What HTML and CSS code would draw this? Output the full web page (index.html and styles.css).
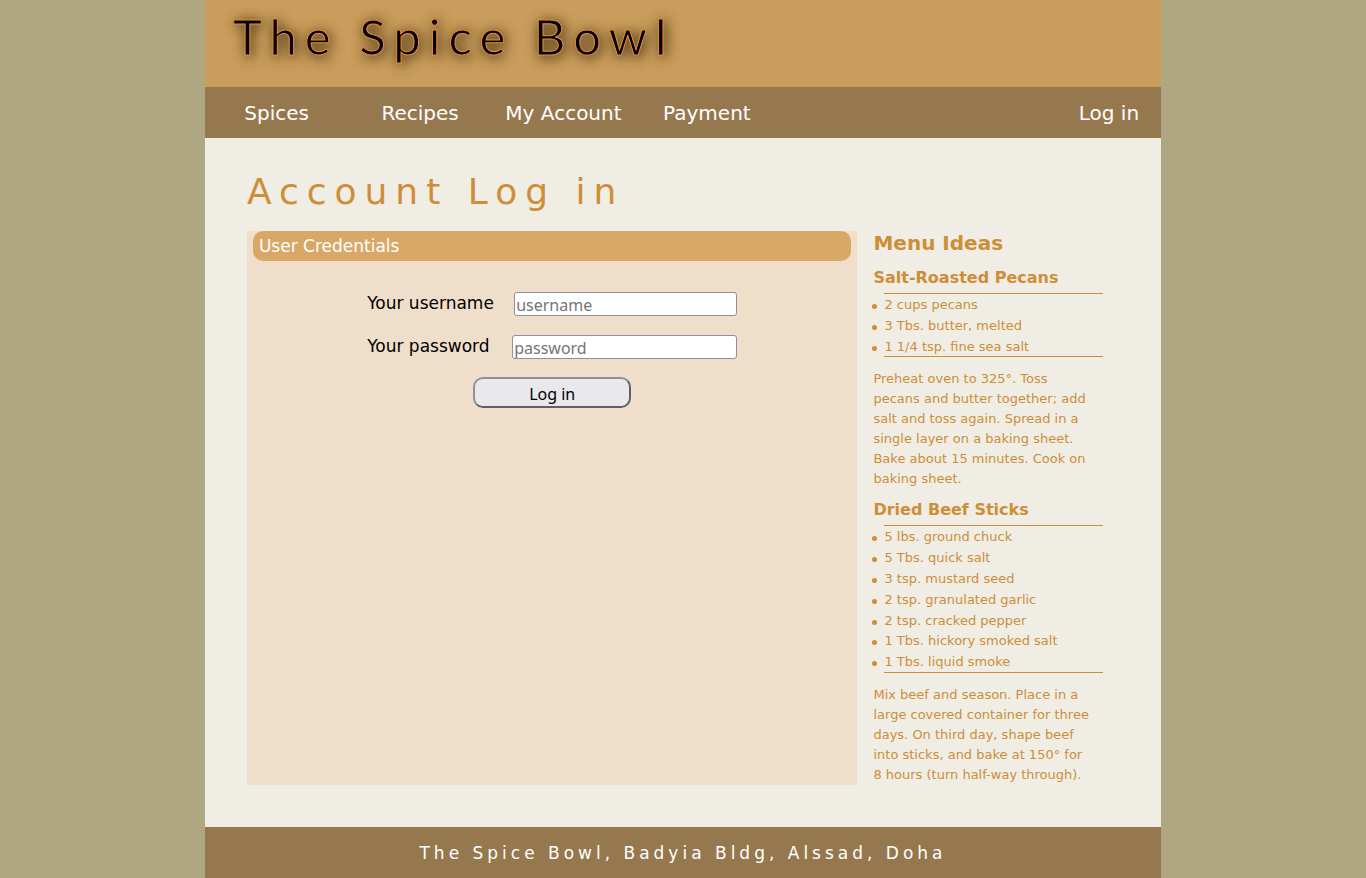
FILE: index.html
```html
<!DOCTYPE html>
<html lang="en">
<head>
<meta charset="utf-8">
<title>The Spice Bowl - Account Log in</title>
<link rel="stylesheet" href="styles.css">
</head>
<body>
<div class="page">
  <header class="banner"><div class="logo">The Spice Bowl</div></header>
  <nav class="nav">
    <a class="nav-link" href="#spices">Spices</a>
    <a class="nav-link" href="#recipes">Recipes</a>
    <a class="nav-link" href="#account">My Account</a>
    <a class="nav-link" href="#payment">Payment</a>
    <a class="nav-login" href="#login">Log in</a>
  </nav>
  <main class="main">
    <h1 class="title">Account Log in</h1>
    <div class="columns">
      <section class="panel">
        <h2 class="panel-title">User Credentials</h2>
        <form class="form">
          <div class="field">
            <label for="username">Your username</label>
            <input class="input" id="username" type="text" placeholder="username">
          </div>
          <div class="field">
            <label for="password">Your password</label>
            <input class="input input-wide" id="password" type="password" placeholder="password">
          </div>
          <button class="submit" type="submit">Log in</button>
        </form>
      </section>
      <aside class="ideas">
        <h2 class="ideas-title">Menu Ideas</h2>
        <h3 class="recipe">Salt-Roasted Pecans</h3>
        <ul class="ingredients">
          <li>2 cups pecans</li>
          <li>3 Tbs. butter, melted</li>
          <li>1 1/4 tsp. fine sea salt</li>
        </ul>
        <p class="method">Preheat oven to 325°. Toss pecans and butter together; add salt and toss again. Spread in a single layer on a baking sheet. Bake about 15 minutes. Cook on baking sheet.</p>
        <h3 class="recipe">Dried Beef Sticks</h3>
        <ul class="ingredients">
          <li>5 lbs. ground chuck</li>
          <li>5 Tbs. quick salt</li>
          <li>3 tsp. mustard seed</li>
          <li>2 tsp. granulated garlic</li>
          <li>2 tsp. cracked pepper</li>
          <li>1 Tbs. hickory smoked salt</li>
          <li>1 Tbs. liquid smoke</li>
        </ul>
        <p class="method">Mix beef and season. Place in a large covered container for three days. On third day, shape beef into sticks, and bake at 150° for 8 hours (turn half-way through).</p>
      </aside>
    </div>
  </main>
  <footer class="footer">The Spice Bowl, Badyia Bldg, Alssad, Doha</footer>
</div>
</body>
</html>
```

FILE: styles.css
```css
* { box-sizing: border-box; }

body {
  margin: 0;
  background: #afa782;
  font-family: Verdana, "DejaVu Sans", sans-serif;
  font-size: 16px;
  color: #000;
}

.page {
  width: 70%;
  min-height: 100vh;
  margin: 0 auto;
  display: flex;
  flex-direction: column;
  background: #f0ede5;
}

.banner {
  padding: 6px 28px 21px;
  background: #ca9d5c;
}

.logo {
  font-family: Lato, sans-serif;
  font-size: 49px;
  line-height: 60px;
  letter-spacing: 8px;
  white-space: nowrap;
  color: #000;
  -webkit-text-stroke: 1px #e8893c;
  text-shadow: 2px 2px 12px #5a4218, 2px 2px 14px #5a4218;
}

.nav {
  display: flex;
  align-items: center;
  padding-top: 2px;
  background: #96784e;
  font-size: 20px;
  line-height: 49px;
}

.nav a {
  color: #fff;
  text-decoration: none;
  white-space: nowrap;
}

.nav-link {
  width: 15%;
  text-align: center;
}

.nav-login {
  margin-left: auto;
  padding-right: 22px;
}

.main {
  flex: 1;
  display: flex;
  flex-direction: column;
  padding: 30px 42px 42px;
}

.title {
  margin: 0 0 15px;
  font-size: 36px;
  font-weight: 400;
  line-height: 48px;
  letter-spacing: 8px;
  color: #ce8e38;
}

.columns {
  flex: 1;
  display: flex;
}

.panel {
  width: 70%;
  padding: 0 6px;
  background: #efdec9;
}

.panel-title {
  margin: 0;
  padding: 0 6px;
  border-radius: 10px;
  background: #d9a867;
  color: #fff;
  font-size: 17px;
  font-weight: 400;
  line-height: 30px;
}

.form {
  width: 370px;
  max-width: 100%;
  margin: 31px auto 0;
  display: flex;
  flex-direction: column;
}

.field {
  display: flex;
  justify-content: space-between;
  margin-bottom: 19px;
  font-size: 17px;
  line-height: 22px;
}

.input,
.submit {
  font-family: Tahoma, "Noto Sans", sans-serif;
  font-size: 16px;
}

.input {
  width: 223px;
  height: 24px;
  padding: 2px 1px 0;
  border: 1px solid #8f8f9d;
  border-radius: 3px;
  background: #fff;
}

.input-wide { width: 225px; }

.input::placeholder { color: #757575; }

.submit {
  align-self: center;
  width: 158px;
  height: 31px;
  margin-top: -1px;
  padding: 2px 0 0;
  border: 2px solid;
  border-color: #8f8f9d #5f5f69 #5f5f69 #8f8f9d;
  border-radius: 10px;
  background: #e9e9ed;
  color: #000;
}

.ideas {
  width: 30%;
  padding: 0 16px;
  color: #ce8e38;
  font-size: 13px;
}

.ideas-title {
  margin: 0 0 12px;
  font-size: 20px;
  line-height: 24px;
}

.recipe {
  margin: 0 0 5px;
  font-size: 16px;
  line-height: 21px;
}

.ingredients {
  margin: 0 0 12px 11px;
  padding: 1px 0 0;
  border: 1px solid #ce8e38;
  border-width: 1px 0;
  line-height: 1.6;
  list-style: none;
}

.ingredients li:last-child { margin-bottom: -1px; }

.ingredients li::before {
  content: "";
  float: left;
  width: 5px;
  height: 5px;
  margin: 9px 0 0 -12px;
  border-radius: 50%;
  background: #ce8e38;
}

.method {
  margin: 0 0 10px;
  padding-right: 9px;
  line-height: 20px;
}

.method:last-child { margin-bottom: 0; }

.footer {
  background: #96784e;
  color: #fff;
  font-size: 17px;
  line-height: 52px;
  letter-spacing: 4px;
  text-align: center;
}
```
